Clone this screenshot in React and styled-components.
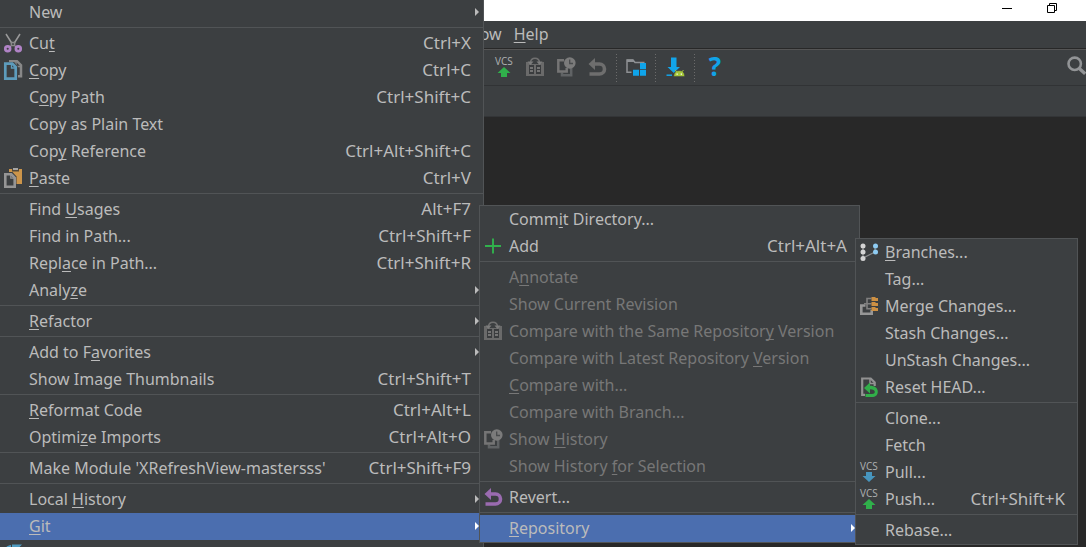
import React, { PureComponent } from 'react'
import styled, { createGlobalStyle } from 'styled-components'

const GlobalStyle = createGlobalStyle`
  * {
    box-sizing: border-box;
  }
  body {
    margin: 0;
    background: #282828;
    overflow: hidden;
  }
  button {
    margin: 0;
    padding: 0;
    border: 0;
    background: none;
    color: inherit;
    font: inherit;
    text-align: left;
    white-space: nowrap;
  }
`

const Desktop = styled.div`
  position: relative;
  height: 100vh;
  overflow: hidden;
  color: #bbbbbb;
  font-family: "Noto Sans", "Open Sans", "Noto Sans CJK SC", sans-serif;
  font-size: 16px;
  line-height: 27px;
`

const TitleBar = styled.header`
  display: flex;
  justify-content: flex-end;
  gap: 35px;
  height: 21px;
  padding: 3px 29px 0 0;
  background: #ffffff;
  button {
    width: 10px;
    height: 10px;
  }
  svg {
    display: block;
  }
`

const MenuBar = styled.nav`
  display: flex;
  gap: 12px;
  height: 28px;
  padding-left: 441px;
  background: #3c3f41;
  border-bottom: 1px solid #282828;
`

const ToolBar = styled.div`
  display: flex;
  gap: 9px;
  height: 37px;
  padding: 7px 0 0 494px;
  background: #3c3f41;
  border-top: 1px solid #555555;
  border-bottom: 1px solid #313335;
`

const ToolGroup = styled.div`
  display: flex;
  gap: 11px;
  height: 20px;
  margin-left: ${props => (props.$end ? 'auto' : '0')};
`

const ToolSeparator = styled.div`
  width: 1px;
  height: 28px;
  margin-top: -3px;
  background: repeating-linear-gradient(#6b6b6b 0 1px, transparent 1px 3px);
`

const NavBar = styled.div`
  height: 31px;
  background: #3c3f41;
  border-bottom: 1px solid #333537;
`

const Menu = styled.div`
  position: absolute;
  left: ${props => props.$left}px;
  top: ${props => props.$top}px;
  width: ${props => props.$width}px;
  background: #3c3f41;
  border: 1px solid #515456;
  hr {
    height: 1px;
    margin: 1px 0 2px;
    border: 0;
    background: #515456;
  }
`

const MenuRow = styled.button`
  && {
    display: flex;
    width: 100%;
    height: 27px;
    padding-left: 3px;
    color: ${props => (props.disabled ? '#777777' : '#bbbbbb')};
    background: ${props => (props.$selected ? '#4b6eaf' : 'transparent')};
  }
`

const IconSlot = styled.span`
  flex: none;
  width: 20px;
  height: 20px;
  margin: 3px 6px 0 0;
`

const Label = styled.span`
  flex: 1;
`

const Mnemonic = styled.span`
  text-decoration: underline;
  text-decoration-thickness: 1px;
  text-underline-offset: 2px;
  text-decoration-skip-ink: none;
`

const Shortcut = styled.span`
  margin-right: 12px;
  font-size: 17px;
  line-height: 25px;
`

const Arrow = styled.span`
  width: 0;
  height: 0;
  margin: 9px 4px 0 0;
  border: 4px solid transparent;
  border-left-color: ${props => (props.$selected ? '#ffffff' : '#bbbbbb')};
  border-right-width: 0;
`

const Svg = styled.svg`
  display: block;
  width: 20px;
  height: 20px;
  overflow: visible;
  text {
    font-family: "Open Sans", sans-serif;
  }
`

const VcsIcon = ({ up }) => (
  <Svg viewBox="0 0 20 20">
    <text x="1" y="8" fontSize="10" fill="#afb1b3">VCS</text>
    {up
      ? <path d="M10 10l6.500 6H13v4H7v-4H3.500z" fill="#30b04b" />
      : <path d="M7 10h6v4h3.500L10 20l-6.500-6H7z" fill="#4795bd" />}
  </Svg>
)

const CutIcon = () => (
  <Svg viewBox="0 0 20 20" fill="none">
    <path d="M3 1l6 9.500M17 1l-6 9.500" stroke="#9a9a9a" strokeWidth="1.500" />
    <path d="M8.300 9.500h3.400v3.200l1.500 1.300M8.300 9.500v3.200L6.800 14M8.500 12.500h3" stroke="#8a8a8a" strokeWidth="1.300" />
    <circle cx="4.700" cy="15.700" r="2.400" stroke="#b083c6" strokeWidth="2.700" />
    <circle cx="15.300" cy="15.700" r="2.400" stroke="#b083c6" strokeWidth="2.700" />
  </Svg>
)

const CopyIcon = () => (
  <Svg viewBox="0 0 20 20" fill="none">
    <path d="M6 1.200h8l4 4v11h-5" stroke="#888888" strokeWidth="2.500" />
    <path d="M13 1.500v5h5" stroke="#888888" strokeWidth="1.300" />
    <path d="M1 2h9.500L15 6.500V20H1z" fill="#3c3f41" />
    <path d="M2.300 3.600h7l3.400 3.500v11.500H2.300z" stroke="#5d9cbc" strokeWidth="2.700" />
    <path d="M8.500 3.500V8H13" stroke="#5d9cbc" strokeWidth="1.300" />
  </Svg>
)

const PasteIcon = () => (
  <Svg viewBox="0 0 20 20" fill="none">
    <path d="M6 1h13v15H6z" fill="#cc954a" />
    <path d="M9 1h7v2.500H9z" fill="#514839" />
    <path d="M10 0h5v2h-5z" fill="#a5a5a5" />
    <path d="M1 4h8.500L13.500 8.500V20H1z" fill="#3c3f41" />
    <path d="M2.300 6.300h6l3.400 3.500v8.900H2.300z" stroke="#959595" strokeWidth="2.600" />
    <path d="M7.800 6v4.200H12" stroke="#959595" strokeWidth="1.300" />
  </Svg>
)

const SyncIcon = () => (
  <Svg viewBox="0 0 20 20" fill="#4f9cc2">
    <path d="M9 1.500h10L15.500 5l2 2-3 3-2-2L9 11z" />
    <path d="M8 2v3.500C5 6 4 8 4 11H1c0-5 2-8.500 7-9z" />
    <path d="M11 18.500H1L4.500 15l-2-2 3-3 2 2L11 9z" />
  </Svg>
)

const CompareIcon = () => (
  <Svg viewBox="0 0 20 20">
    <path d="M1 5h18v14H1z" fill="#6a6a6a" />
    <path d="M4 8h5v9H4zM11 8h5v9h-5z" fill="#3a3c3e" />
    <path d="M5 10h3v2H5zM5 13h3v2H5zM12 10h3v2h-3zM12 13h3v2h-3z" fill="#747474" />
    <path d="M5 4h10v3H5z" fill="#3c3f41" />
    <path d="M5.500 5.500c.5-5.800 8.500-5.800 9 0" fill="none" stroke="#707070" strokeWidth="1.500" />
    <path d="M2.500 4.500h6l-3 3.500zM11.500 4.500h6l-3 3.500z" fill="#7c7c7c" />
  </Svg>
)

const HistoryIcon = () => (
  <Svg viewBox="0 0 20 20" fill="none">
    <path d="M6 15.500v2.700h9.200V11" stroke="#606365" strokeWidth="2.500" />
    <path d="M8 3.200H2.300v11.200h8.400V11" stroke="#757575" strokeWidth="2.500" />
    <circle cx="13.800" cy="6" r="5.800" fill="#7b7b7b" />
    <path d="M13.700 2.500v4H17" stroke="#4a4c4e" strokeWidth="1.300" />
  </Svg>
)

const UndoIcon = ({ color }) => (
  <Svg viewBox="0 0 20 20" fill="none">
    <path d="M1.500 7L8 1v12z" fill={color} />
    <path d="M7 7h5.500a4.800 4.800 0 0 1 0 10H2.500" stroke={color} strokeWidth="3.600" />
  </Svg>
)

const AddIcon = () => (
  <Svg viewBox="0 0 20 20">
    <path d="M2 10h16M10 2.500v15" stroke="#31b14c" strokeWidth="1.900" />
  </Svg>
)

const BranchIcon = () => (
  <Svg viewBox="0 0 20 20">
    <path d="M4 4v12l12-6V4" fill="none" stroke="#8b8d8f" strokeWidth="1.200" />
    <g fill="#d4d4d4">
      <circle cx="4" cy="4" r="2.500" />
      <circle cx="4" cy="10" r="2.500" />
      <circle cx="4" cy="16.500" r="2.500" />
    </g>
    <g fill="#8ecbf2">
      <circle cx="16.500" cy="4" r="2.500" />
      <circle cx="16.500" cy="10" r="2.500" />
    </g>
  </Svg>
)

const MergeIcon = () => (
  <Svg viewBox="0 0 20 20" fill="none">
    <path d="M6.500 9.500H2.300v8.200h10.400V14" stroke="#969696" strokeWidth="2.600" />
    <path d="M12.500 2.500H8v10.200h4.500M5 7.700h7.500" stroke="#808080" strokeWidth="1.600" />
    <path d="M12.500 1h3.500l1 1h2v3h-6.500zM12.500 6h3.500l1 1h2v3h-6.500zM12.500 11h3.500l1 1h2v3h-6.500z" fill="#cd9043" />
  </Svg>
)

const ResetIcon = () => (
  <Svg viewBox="0 0 20 20" fill="none">
    <path d="M6 17.800H3.200V1.500h8.500l4 4V9" stroke="#929292" strokeWidth="2.200" />
    <path d="M11 1v5.500h5" stroke="#929292" strokeWidth="1.500" />
    <path d="M5 11l6-5.500v3.200c4.500 0 7.800 2 7.800 6 0 3.300-2.500 5.300-5.800 5.300H6.500v-3H13c1.800 0 2.800-.8 2.800-2.200 0-1.800-1.800-2.600-4.800-2.600v4.300z" fill="#31ae49" />
  </Svg>
)

const ProjectIcon = () => (
  <Svg viewBox="0 0 20 20" fill="none">
    <path d="M5.500 15.200H1V3h6l2 2.500h9.500" stroke="#8e9194" strokeWidth="1.500" />
    <path d="M1 2.500h6l2 2.500H1z" fill="#8e9194" />
    <path d="M14 6h6v6h-6zM7 12.700h6v6H7zM14 12.700h6v6h-6z" fill="#0fa4ea" />
  </Svg>
)

const SdkIcon = () => (
  <Svg viewBox="0 0 20 20">
    <path d="M6 .5h5.500v9.500h3.500L8.800 16 2.500 10H6z" fill="#12a5ea" />
    <path d="M1.500 18.200h5.500" stroke="#12a5ea" strokeWidth="1.500" />
    <path d="M8.800 19.500c0-4 2-5.800 5.400-5.800s5.400 1.800 5.400 5.800z" fill="#a4c639" stroke="#3c3f41" strokeWidth=".5" />
    <path d="M10 13l1.800 2M18.500 13l-1.800 2" stroke="#a4c639" />
    <path d="M11.500 16.500h1.300v1.300h-1.300zM15.700 16.500H17v1.300h-1.300z" fill="#ffffff" />
  </Svg>
)

const HelpIcon = () => (
  <Svg viewBox="0 0 20 20">
    <text x="11" y="19" fontSize="26" fontWeight="700" textAnchor="middle" fill="#10a3e8">?</text>
  </Svg>
)

const SearchIcon = () => (
  <Svg viewBox="0 0 20 20" fill="none" stroke="#929496">
    <circle cx="8.700" cy="6.800" r="6.200" strokeWidth="2.600" />
    <path d="M13 11.200l6.200 5.600" strokeWidth="3.400" />
  </Svg>
)

const MinimizeIcon = () => (
  <svg width="10" height="10"><path d="M0 5.500h10" stroke="#000" /></svg>
)

const RestoreIcon = () => (
  <svg width="10" height="10" fill="none" stroke="#000">
    <path d="M.5 2.500h7v7h-7zM2.500 2.500v-2h7v7h-2" />
  </svg>
)

// '&' stands before the mnemonic letter, '-' is a separator
const contextMenu = [
  { text: 'New', sub: true },
  '-',
  { text: 'Cu&t', keys: 'Ctrl+X', icon: <CutIcon /> },
  { text: '&Copy', keys: 'Ctrl+C', icon: <CopyIcon /> },
  { text: 'C&opy Path', keys: 'Ctrl+Shift+C' },
  { text: 'Copy as Plain Text' },
  { text: 'Cop&y Reference', keys: 'Ctrl+Alt+Shift+C' },
  { text: '&Paste', keys: 'Ctrl+V', icon: <PasteIcon /> },
  '-',
  { text: 'Find &Usages', keys: 'Alt+F7' },
  { text: 'Find in Path...', keys: 'Ctrl+Shift+F' },
  { text: 'Repl&ace in Path...', keys: 'Ctrl+Shift+R' },
  { text: 'Analy&ze', sub: true },
  '-',
  { text: '&Refactor', sub: true },
  '-',
  { text: 'Add to F&avorites', sub: true },
  { text: 'Show Image Thumbnails', keys: 'Ctrl+Shift+T' },
  '-',
  { text: '&Reformat Code', keys: 'Ctrl+Alt+L' },
  { text: 'Optimi&ze Imports', keys: 'Ctrl+Alt+O' },
  '-',
  { text: "Make Module 'XRefreshView-mastersss'", keys: 'Ctrl+Shift+F9' },
  '-',
  { text: 'Local &History', sub: true },
  { text: '&Git', sub: true, selected: true },
  { text: "Synchronize 'XRefreshView-mastersss'", icon: <SyncIcon /> }
]

const gitMenu = [
  { text: 'Comm&it Directory...' },
  { text: 'Add', keys: 'Ctrl+Alt+A', icon: <AddIcon /> },
  '-',
  { text: 'A&nnotate', disabled: true },
  { text: 'Show Current Revision', disabled: true },
  { text: 'Compare with the Same Repositor&y Version', disabled: true, icon: <CompareIcon /> },
  { text: 'Compare with Latest Repository &Version', disabled: true },
  { text: '&Compare with...', disabled: true },
  { text: 'Compare with Branch...', disabled: true },
  { text: 'Show &History', disabled: true, icon: <HistoryIcon /> },
  { text: 'Show History &for Selection', disabled: true },
  '-',
  { text: 'Revert...', icon: <UndoIcon color="#9a6bb0" /> },
  '-',
  { text: '&Repository', sub: true, selected: true }
]

const repositoryMenu = [
  { text: '&Branches...', icon: <BranchIcon /> },
  { text: 'Tag...' },
  { text: 'Merge Changes...', icon: <MergeIcon /> },
  { text: 'Stash Changes...' },
  { text: 'UnStash Changes...' },
  { text: 'Reset HEAD...', icon: <ResetIcon /> },
  '-',
  { text: 'Clone...' },
  { text: 'Fetch' },
  { text: 'Pull...', icon: <VcsIcon /> },
  { text: 'Push...', keys: 'Ctrl+Shift+K', icon: <VcsIcon up /> },
  '-',
  { text: 'Rebase...' }
]

function withMnemonic(text) {
  const at = text.indexOf('&')
  if (at < 0) return text
  return (
    <>
      {text.slice(0, at)}<Mnemonic>{text[at + 1]}</Mnemonic>{text.slice(at + 2)}
    </>
  )
}

const PopupMenu = ({ items, label, left, top, width }) => (
  <Menu role="menu" aria-label={label} $left={left} $top={top} $width={width}>
    {items.map((item, index) => item === '-'
      ? <hr key={index} />
      : (
        <MenuRow key={index} role="menuitem" disabled={item.disabled} $selected={item.selected}>
          <IconSlot>{item.icon}</IconSlot>
          <Label>{withMnemonic(item.text)}</Label>
          {item.keys && <Shortcut>{item.keys}</Shortcut>}
          {item.sub && <Arrow $selected={item.selected} />}
        </MenuRow>
      ))}
  </Menu>
)

export default class App extends PureComponent {
  render() {
    return (
      <Desktop>
        <GlobalStyle />
        <TitleBar>
          <button aria-label="Minimize"><MinimizeIcon /></button>
          <button aria-label="Restore"><RestoreIcon /></button>
        </TitleBar>
        <MenuBar>
          <button>Window</button>
          <button>{withMnemonic('&Help')}</button>
        </MenuBar>
        <ToolBar>
          <ToolGroup>
            <button aria-label="Commit"><VcsIcon up /></button>
            <button aria-label="Compare" disabled><CompareIcon /></button>
            <button aria-label="Show history" disabled><HistoryIcon /></button>
            <button aria-label="Revert" disabled><UndoIcon color="#6e6e6e" /></button>
          </ToolGroup>
          <ToolSeparator />
          <ToolGroup>
            <button aria-label="Project structure"><ProjectIcon /></button>
          </ToolGroup>
          <ToolSeparator />
          <ToolGroup>
            <button aria-label="SDK manager"><SdkIcon /></button>
          </ToolGroup>
          <ToolSeparator />
          <ToolGroup>
            <button aria-label="Help"><HelpIcon /></button>
          </ToolGroup>
          <ToolGroup $end>
            <button aria-label="Search everywhere"><SearchIcon /></button>
          </ToolGroup>
        </ToolBar>
        <NavBar />
        <PopupMenu label="Project" items={contextMenu} left={-1} top={-2} width={485} />
        <PopupMenu label="Git" items={gitMenu} left={479} top={205} width={381} />
        <PopupMenu label="Repository" items={repositoryMenu} left={855} top={238} width={223} />
      </Desktop>
    )
  }
}
